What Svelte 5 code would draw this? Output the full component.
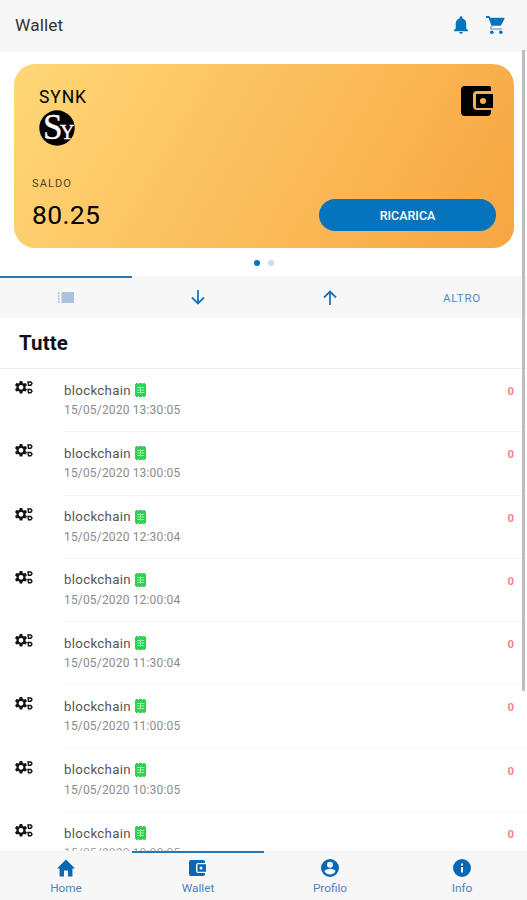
<script>
  let title = 'Wallet'
  let currency = 'SYNK'
  let balance = '80.25'
  let transactions = [
    { name: 'blockchain', date: '15/05/2020 13:30:05', amount: 0 },
    { name: 'blockchain', date: '15/05/2020 13:00:05', amount: 0 },
    { name: 'blockchain', date: '15/05/2020 12:30:04', amount: 0 },
    { name: 'blockchain', date: '15/05/2020 12:00:04', amount: 0 },
    { name: 'blockchain', date: '15/05/2020 11:30:04', amount: 0 },
    { name: 'blockchain', date: '15/05/2020 11:00:05', amount: 0 },
    { name: 'blockchain', date: '15/05/2020 10:30:05', amount: 0 },
    { name: 'blockchain', date: '15/05/2020 10:00:05', amount: 0 }
  ]
  let filter = 'all'
  let page = 'wallet'
</script>

<div class="app">
  <header>
    <h1>{title}</h1>
    <svg class="bell" viewBox="0 0 16 20">
      <path d="M8 20a2.200 2.200 0 0 0 2.200-2H5.800A2.200 2.200 0 0 0 8 20zM14 14V8.500C14 5.300 12.200 2.900 9.500 2.200V1.500a1.500 1.500 0 0 0-3 0v.7C3.800 2.900 2 5.300 2 8.500V14l-2 2v1h16v-1z" />
    </svg>
    <svg class="cart" viewBox="0 0 19 18">
      <path d="M0 0h3.400l.9 1.700H18q.8.300.4 1.200l-3.200 6q-.4.900-1.500.9H5.500L2.500 2H0z" />
      <path class="rail" d="M6.200 9.500l-1.500 2.300q-.3 1.200 1 1.200H16" />
      <circle cx="5.800" cy="16.200" r="1.800" />
      <circle cx="14.800" cy="16.200" r="1.800" />
    </svg>
  </header>

  <main>
    <div class="card">
      <div class="card_top">
        <div>
          <div class="currency">{currency}</div>
          <svg class="logo" viewBox="0 0 36 36">
            <circle cx="18" cy="18" r="17.700" />
            <text x="4" y="29">S<tspan class="logo_y" dx="-2.500">Y</tspan></text>
          </svg>
        </div>
        <svg class="card_icon" viewBox="0 0 32 30">
          <path d="M30 24v2a4 4 0 0 1-4 4H4a4 4 0 0 1-4-4V4a4 4 0 0 1 4-4h22a4 4 0 0 1 4 1v4H16a4 4 0 0 0-4 4v11a4 4 0 0 0 4 4z" />
          <path fill-rule="evenodd" d="M15 8h17v14H15zM22 12a3 3 0 1 0 0 6 3 3 0 0 0 0-6z" />
        </svg>
      </div>
      <div class="card_bottom">
        <div>
          <div class="label">SALDO</div>
          <div class="balance">{balance}</div>
        </div>
        <button type="button">RICARICA</button>
      </div>
    </div>

    <div class="dots">
      <span class="dot on"></span>
      <span class="dot"></span>
    </div>

    <div class="filters">
      <button type="button" class:active={filter === 'all'} on:click={() => filter = 'all'}>
        <svg class="list" viewBox="0 0 16 11">
          <path d="M0 0h1.500v2H0zM0 3h1.500v2H0zM0 6h1.500v2H0zM0 9h1.500v2H0zM3.500 0H16v11H3.500z" />
        </svg>
      </button>
      <button type="button" class:active={filter === 'in'} on:click={() => filter = 'in'}>
        <svg class="arrow" viewBox="0 0 14 15">
          <path d="M7 0v13.500M1 7.500l6 6 6-6" />
        </svg>
      </button>
      <button type="button" class:active={filter === 'out'} on:click={() => filter = 'out'}>
        <svg class="arrow" viewBox="0 0 14 15">
          <path d="M7 15V1.500M1 7.500l6-6 6 6" />
        </svg>
      </button>
      <button type="button" class:active={filter === 'other'} on:click={() => filter = 'other'}>ALTRO</button>
    </div>

    <h2>Tutte</h2>

    {#each transactions as item}
      <div class="row">
        <svg class="gears" viewBox="0 0 18 14">
          <path fill-rule="evenodd" d="M4.700.5h2.600l.4 2 1.100.6 1.900-.6L12 4.700 10.500 6v1.500L12 8.900l-1.300 2.200-1.900-.6-1.100.6-.4 2H4.700l-.4-2-1.100-.6-1.900.6L0 8.900l1.500-1.400V6L0 4.700l1.300-2.200 1.900.6 1.100-.6zM6 4.400a2.400 2.400 0 1 0 0 4.800 2.400 2.400 0 0 0 0-4.800z" />
          <path class="small_gear" d="M13 1.500h2.800l1.200 1.500-1.200 1.800H13.500zM13 9h2.800l1.200 1.700-1.200 1.600H13.500z" />
        </svg>
        <div class="info">
          <div class="text">
            <div class="name">
              {item.name}
              <svg class="receipt" viewBox="0 0 11 14">
                <path class="paper" d="M0 1h1V0h2v1h1V0h3v1h1V0h2v1h1v12h-1v1H8v-1H7v1H4v-1H3v1H1v-1H0z" />
                <path class="lines" d="M2 4.500h7M2 7h7M2 9.500h7M5.500 3.500v7" />
              </svg>
            </div>
            <div class="date">{item.date}</div>
          </div>
          <div class="amount">{item.amount}</div>
        </div>
      </div>
    {/each}
  </main>
  <div class="scrollbar"></div>

  <nav>
    <a href="#home" class:active={page === 'home'}>
      <svg class="home" viewBox="0 0 16 15">
        <path d="M6.200 15V9.800h3.600V15h3.900V8H16L8 0 0 8h2.300v7z" />
      </svg>
      Home
    </a>
    <a href="#wallet" class:active={page === 'wallet'}>
      <svg class="purse" viewBox="0 0 18 16">
        <path d="M16 13v1a2 2 0 0 1-2 2H2a2 2 0 0 1-2-2V2a2 2 0 0 1 2-2h12a2 2 0 0 1 2 2v1H9a2 2 0 0 0-2 2v6a2 2 0 0 0 2 2z" />
        <path fill-rule="evenodd" d="M8.500 4.200H17v7.600H8.500zM12 6.500a1.500 1.500 0 1 0 0 3 1.500 1.500 0 0 0 0-3z" />
      </svg>
      Wallet
    </a>
    <a href="#profilo" class:active={page === 'profilo'}>
      <svg viewBox="0 0 18 18">
        <path fill-rule="evenodd" d="M9 0a9 9 0 1 0 0 18A9 9 0 0 0 9 0zm0 2.700a3 3 0 1 1 0 6 3 3 0 0 1 0-6zM3.500 12.500c0-1.800 3.700-2.800 5.500-2.800s5.500 1 5.500 2.800a6.500 6.500 0 0 1-11 0z" />
      </svg>
      Profilo
    </a>
    <a href="#info" class:active={page === 'info'}>
      <svg viewBox="0 0 18 18">
        <path fill-rule="evenodd" d="M9 0a9 9 0 1 0 0 18A9 9 0 0 0 9 0zM8 4.500h2v2H8zM8 8h2v5.500H8z" />
      </svg>
      Info
    </a>
  </nav>
</div>

<style>
  :global(body) {
    margin: 0;
    background: #fff;
    overflow: hidden;
  }
  .app {
    position: relative;
    display: flex;
    flex-direction: column;
    height: 900px;
    font-family: Roboto, Arial, sans-serif;
    color: #000;
  }
  svg {
    display: block;
    fill: currentColor;
    flex: none;
  }
  button {
    border: 0;
    padding: 0;
    font-family: inherit;
    background: none;
  }
  header {
    display: flex;
    align-items: center;
    flex: none;
    height: 52px;
    box-sizing: border-box;
    padding: 0 22px 2px 15px;
    background: #f7f7f7;
    color: #0674bd;
  }
  h1 {
    flex: 1;
    margin: 0;
    font-size: 17.3px;
    font-weight: 400;
    letter-spacing: 0.1px;
    color: #333;
  }
  .bell {
    width: 14px;
    height: 18px;
    margin-right: 18px;
  }
  .cart {
    width: 19px;
    height: 18px;
  }
  .rail {
    fill: none;
    stroke: #7fb0dc;
    stroke-width: 1.5;
  }
  main {
    flex: 1;
    min-height: 0;
    overflow: hidden;
  }
  .card {
    display: flex;
    flex-direction: column;
    justify-content: space-between;
    box-sizing: border-box;
    height: 184px;
    margin: 12px 13px 0 14px;
    padding: 22px 18px 17px 18px;
    border-radius: 21px;
    background: linear-gradient(120deg, #ffd777, #f7a541);
  }
  .card_top {
    display: flex;
    justify-content: space-between;
    padding-left: 7px;
  }
  .currency {
    font-size: 17.5px;
    line-height: 22px;
    letter-spacing: 0.9px;
  }
  .logo {
    width: 36px;
    height: 36px;
    margin-top: 2px;
    margin-bottom: 1px;
  }
  .logo text {
    fill: #fff;
    stroke: #fff;
    stroke-width: 0.4;
    font-family: "Liberation Serif", serif;
    font-size: 35px;
  }
  .logo .logo_y {
    font-size: 20px;
  }
  .card_icon {
    width: 32px;
    height: 30px;
    margin-right: 3px;
  }
  .card_bottom {
    display: flex;
    justify-content: space-between;
    align-items: flex-end;
  }
  .label {
    font-size: 11px;
    line-height: 14px;
    letter-spacing: 1.1px;
    color: #514325;
  }
  .balance {
    margin-top: 7px;
    font-size: 26.5px;
    line-height: 33px;
    letter-spacing: 0.35px;
  }
  .card_bottom button {
    width: 177px;
    height: 32px;
    border-radius: 16px;
    background: #0674bd;
    color: #fff;
    font-size: 12.5px;
    font-weight: 500;
  }
  .dots {
    display: flex;
    justify-content: center;
    gap: 8px;
    padding-top: 12px;
    height: 16px;
  }
  .dot {
    width: 6px;
    height: 6px;
    border-radius: 50%;
    background: #c4dff1;
  }
  .dot.on {
    background: #0674bd;
  }
  .filters {
    display: grid;
    grid-template-columns: repeat(4, 1fr);
    height: 42px;
    margin-right: -1px;
    background: #f7f7f7;
  }
  .filters button {
    display: flex;
    align-items: center;
    justify-content: center;
    border-top: 2px solid transparent;
    padding-bottom: 1px;
    color: #4c8cc2;
    font-size: 11.5px;
    letter-spacing: 0.8px;
  }
  .filters button.active {
    border-top-color: #2478b8;
  }
  .list {
    width: 16px;
    height: 11px;
    color: #aebfdf;
  }
  .arrow {
    width: 14px;
    height: 15px;
    fill: none;
    stroke: #1975b9;
    stroke-width: 1.8;
  }
  h2 {
    height: 50px;
    margin: 0;
    padding-left: 19px;
    border-bottom: 1px solid #ececec;
    font-size: 20.5px;
    font-weight: 700;
    letter-spacing: 0.1px;
    line-height: 51px;
    color: #111;
  }
  .row {
    display: flex;
    height: 63.3px;
    padding-left: 15px;
  }
  .gears {
    width: 18px;
    height: 15px;
    margin: 11px 31px 0 0;
    color: #111;
  }
  .small_gear {
    fill: none;
    stroke: currentColor;
    stroke-width: 1.4;
  }
  .info {
    display: flex;
    flex: 1;
    justify-content: space-between;
    box-sizing: border-box;
    padding: 12px 13px 0 0;
    border-bottom: 1px solid #f5f5f5;
  }
  .name {
    display: flex;
    align-items: center;
    gap: 4px;
    height: 18px;
    font-size: 13.3px;
    letter-spacing: 0.3px;
    color: #555;
  }
  .receipt {
    width: 11px;
    height: 14px;
  }
  .paper {
    fill: #2bd34f;
  }
  .lines {
    stroke: #9cf0ad;
    stroke-width: 1;
  }
  .date {
    margin-top: 2px;
    font-size: 12px;
    line-height: 18px;
    letter-spacing: 0.17px;
    color: #8b8b8b;
  }
  .amount {
    font-size: 11.5px;
    font-weight: 700;
    line-height: 20px;
    color: #f98585;
  }
  .scrollbar {
    position: absolute;
    top: 50px;
    right: 2px;
    width: 3px;
    height: 641px;
    background: #bdbdbd;
  }
  nav {
    position: relative;
    display: grid;
    grid-template-columns: repeat(4, 1fr);
    flex: none;
    height: 49px;
    margin: -3px -1px 0 0;
    padding-top: 3px;
    background: linear-gradient(#f7f7f740 3px, #f7f7f7 3px);
  }
  nav a {
    display: flex;
    flex-direction: column;
    align-items: center;
    justify-content: space-between;
    box-sizing: border-box;
    padding: 6px 0 4px;
    border-top: 2px solid transparent;
    color: #4d83bf;
    font-size: 11.8px;
    line-height: 16px;
    text-decoration: none;
  }
  nav a.active {
    border-top-color: #2478b8;
  }
  nav svg {
    width: 18px;
    height: 18px;
    color: #0868b3;
  }
</style>
